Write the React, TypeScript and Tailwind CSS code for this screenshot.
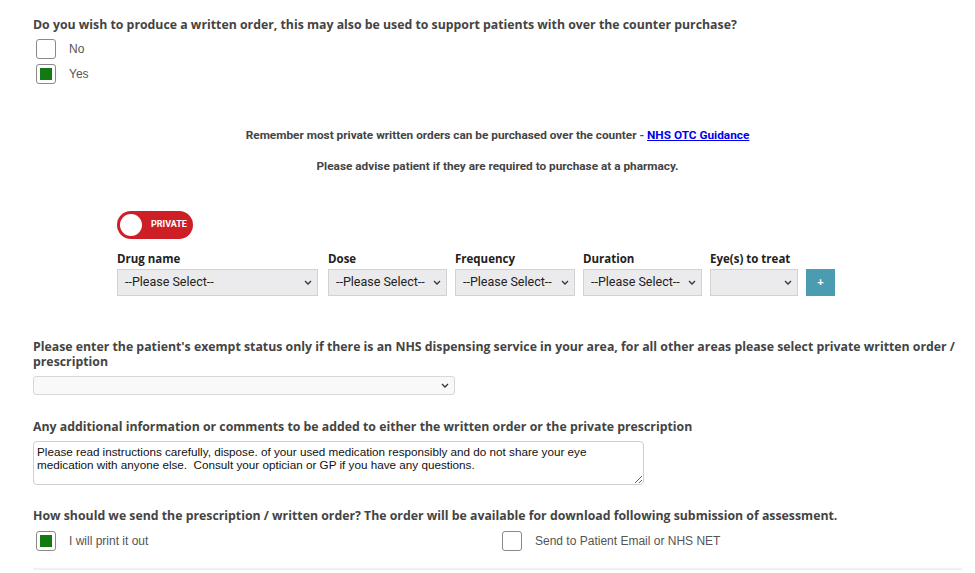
import React from 'react';

function Box({ checked }: { checked?: boolean }) {
  return (
    <span className="flex h-5 w-5 shrink-0 items-center justify-center rounded-[3px] border border-[#8a8a8a] bg-white">
      {checked && <span className="h-3 w-3 bg-[#137a13]" />}
    </span>
  );
}

function Check({ label, checked }: { label: string; checked?: boolean }) {
  return (
    <div className="flex h-5 items-center gap-[13px]">
      <Box checked={checked} />
      <span className="text-[12px] text-[#555]">{label}</span>
    </div>
  );
}

function Chevron() {
  return (
    <svg width="8" height="5" viewBox="0 0 8 5" className="shrink-0">
      <path d="M1 1l3 3 3-3" fill="none" stroke="#333" strokeWidth="1.3" />
    </svg>
  );
}

function FakeSelect({ width, text }: { width: string; text?: string }) {
  return (
    <div className={`flex h-[27px] items-center justify-between border border-[#d2d2d2] bg-[#ebebed] pl-[7px] pr-[5px] font-['Roboto',sans-serif] text-[12.5px] text-[#222] ${width}`}>
      <span>{text}</span>
      <Chevron />
    </div>
  );
}

export default function App() {
  const heading = "font-['Open_Sans',sans-serif] text-[12.3px] font-bold text-[#444]";

  const fields = [
    { label: 'Drug name', width: 'w-[201px] mr-[2px]', text: '--Please Select--' },
    { label: 'Dose', width: 'w-[119px]', text: '--Please Select--' },
    { label: 'Frequency', width: 'w-[120px]', text: '--Please Select--' },
    { label: 'Duration', width: 'w-[119px]', text: '--Please Select--' },
    { label: 'Eye(s) to treat', width: 'w-[88px]', text: '' },
  ];

  return (
    <div className="min-h-[573px] w-[975px] bg-white font-['Liberation_Sans',Arial,sans-serif]">
      <div className="w-[962px] pl-[33px] pt-[16px]">
        <h2 className={heading}>
          Do you wish to produce a written order, this may also be used to support patients with over the counter purchase?
        </h2>
        <div className="ml-[3px] mt-[5px] flex flex-col gap-[5px]">
          <Check label="No" />
          <Check label="Yes" checked />
        </div>

        <div className="mt-[43px] flex flex-col items-center gap-[13px] font-['Roboto',sans-serif] text-[11.8px] font-bold text-[#444]">
          <p>
            Remember most private written orders can be purchased over the counter -{' '}
            <a href="#" className="text-[#0000ee] underline">NHS OTC Guidance</a>
          </p>
          <p>Please advise patient if they are required to purchase at a pharmacy.</p>
        </div>

        <div className="ml-[84px] mt-[35px]">
          <div className="flex h-7 w-[76px] items-center rounded-full bg-[#cf1f26] pl-[3px]">
            <span className="h-[22px] w-[22px] rounded-full bg-white" />
            <span className="ml-[9px] font-['Roboto',sans-serif] text-[9px] font-bold text-white">PRIVATE</span>
          </div>
          <div className="mt-[13px] flex items-end gap-2">
            {fields.map((f) => (
              <div key={f.label}>
                <div className="mb-[3px] font-['Open_Sans',sans-serif] text-[11.5px] font-bold leading-[14px] text-[#222]">{f.label}</div>
                <FakeSelect width={f.width} text={f.text} />
              </div>
            ))}
            <button className="flex h-[27px] w-[29px] items-center justify-center bg-[#4b9cb1] text-[11px] font-bold text-white">
              +
            </button>
          </div>
        </div>

        <h2 className={`${heading} mt-[43px] leading-[15px]`}>
          Please enter the patient's exempt status only if there is an NHS dispensing service in your area, for all other areas please select private written order / prescription
        </h2>
        <div className="mt-[7px] flex h-[19px] w-[422px] items-center justify-end rounded-[3px] border border-[#d8d8d8] bg-[#f9f9f9] pr-[5px]">
          <Chevron />
        </div>

        <h2 className={`${heading} mt-[23px]`}>
          Any additional information or comments to be added to either the written order or the private prescription
        </h2>
        <textarea
          className="mt-[5px] block h-[44px] w-[611px] resize rounded-[4px] border border-[#cfcfcf] px-[3px] py-[3px] font-['Liberation_Sans',Arial,sans-serif] text-[11.7px] leading-[13px] text-[#111] outline-none"
          defaultValue="Please read instructions carefully, dispose. of your used medication responsibly and do not share your eye medication with anyone else.  Consult your optician or GP if you have any questions."
        />

        <h2 className={`${heading} mt-[22px]`}>
          How should we send the prescription / written order? The order will be available for download following submission of assessment.
        </h2>
        <div className="ml-[3px] mt-[5px] flex">
          <div className="w-[466px]">
            <Check label="I will print it out" checked />
          </div>
          <Check label="Send to Patient Email or NHS NET" />
        </div>
        <div className="mt-[17px] h-[2px] bg-[#f0f0f0]" />
      </div>
    </div>
  );
}
